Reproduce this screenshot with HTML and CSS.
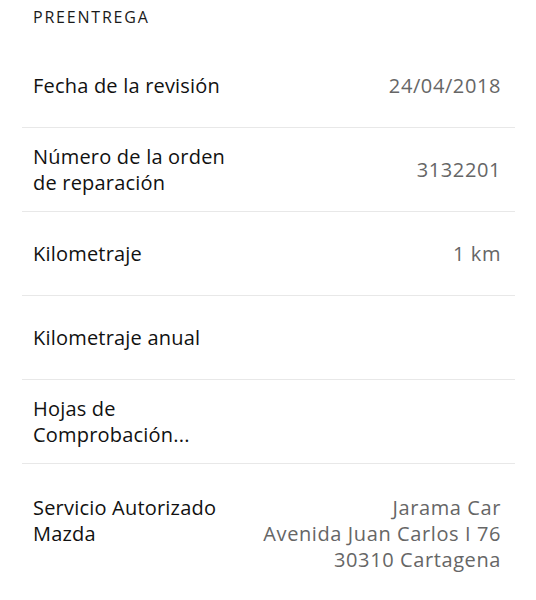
FILE: index.html
```html
<!DOCTYPE html>
<html lang="es">
<head>
    <meta charset="UTF-8">
    <meta name="viewport" content="width=device-width, initial-scale=1.0">
    <title>Preentrega</title>
    <link rel="stylesheet" href="styles.css">
</head>
<body>
    <h2 class="section-title">PREENTREGA</h2>

    <div class="list">
        <div class="row">
            <div class="label">Fecha de la revisión</div>
            <div class="value">24/04/2018</div>
        </div>
        <div class="row">
            <div class="label">Número de la orden de reparación</div>
            <div class="value">3132201</div>
        </div>
        <div class="row">
            <div class="label">Kilometraje</div>
            <div class="value">1 km</div>
        </div>
        <div class="row">
            <div class="label">Kilometraje anual</div>
            <div class="value"></div>
        </div>
        <div class="row">
            <div class="label">Hojas de Comprobación...</div>
            <div class="value"></div>
        </div>
        <div class="row row-top">
            <div class="label">Servicio Autorizado Mazda</div>
            <div class="value">Jarama Car<br>Avenida Juan Carlos I 76<br>30310 Cartagena</div>
        </div>
    </div>
</body>
</html>
```

FILE: styles.css
```css
body {
    margin: 0;
    background: #fff;
    font-family: "Open Sans", "Noto Sans", sans-serif;
    color: #111;
}
.section-title {
    margin: 0 0 14px;
    padding: 4px 0 0 33px;
    font-size: 16px;
    font-weight: 400;
    line-height: 26px;
    letter-spacing: 1.8px;
    color: #1a1a1a;
}
.list {
    padding: 0 21px 0 22px;
}
.row {
    display: flex;
    justify-content: space-between;
    align-items: center;
    min-height: 83px;
    padding: 0 14px 0 11px;
    border-bottom: 1px solid #e8e8e8;
    font-size: 20px;
    line-height: 26px;
    letter-spacing: 0.2px;
}
.row-top {
    align-items: flex-start;
    padding-top: 31px;
    border-bottom: none;
}
.label {
    max-width: 215px;
}
.value {
    text-align: right;
    color: #666;
    letter-spacing: 0.6px;
}
```
